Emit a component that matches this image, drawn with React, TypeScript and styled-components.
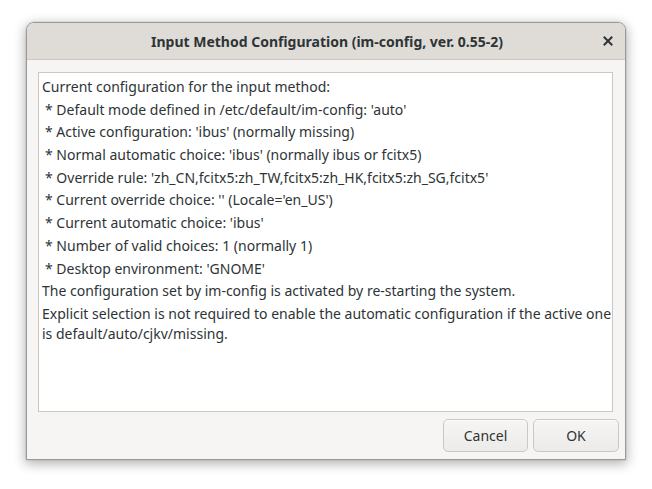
import styled, { createGlobalStyle } from 'styled-components';

const GlobalStyle = createGlobalStyle`
    html, body {
        margin: 0;
        padding: 0;
        background: #ffffff;
    }
    body {
        font-family: "Noto Sans", "Open Sans", "DejaVu Sans", sans-serif;
        color: #2e3436;
    }
`;

const Screen = styled.div`
    width: 652px;
    height: 489px;
    padding: 22px 0 0 26px;
    box-sizing: border-box;
`;

const Dialog = styled.div`
    width: 600px;
    height: 438px;
    box-sizing: border-box;
    display: flex;
    flex-direction: column;
    background: #f6f5f4;
    border: 1px solid #9a9996;
    border-radius: 8px 8px 0 0;
    box-shadow: 0 3px 12px 1px rgba(0, 0, 0, 0.3), 0 0 0 1px rgba(0, 0, 0, 0.05);
    overflow: hidden;
`;

const TitleBar = styled.div`
    height: 36px;
    flex: none;
    display: flex;
    align-items: center;
    justify-content: center;
    position: relative;
    background: #dfdcd8;
    border-bottom: 1px solid #cdc7c2;
`;

const Title = styled.div`
    font-size: 14px;
    font-weight: bold;
    color: #2e3436;
    padding-left: 2px;
`;

const CloseButton = styled.div`
    position: absolute;
    right: 5px;
    top: 6px;
    width: 24px;
    height: 24px;
    display: flex;
    align-items: center;
    justify-content: center;
`;

const Body = styled.div`
    flex: 1;
    display: flex;
    flex-direction: column;
    padding: 12px 6px 7px 11px;
    gap: 7px;
`;

const TextView = styled.div`
    flex: 1;
    background: #ffffff;
    border: 1px solid #cdc7c2;
    margin-right: 6px;
    padding: 4px 0 4px 3px;
    display: flex;
    flex-direction: column;
    gap: 2.7px;
    font-size: 14px;
    line-height: 20px;
    color: #2e3436;
`;

const Paragraph = styled.div<{ $indent?: boolean }>`
    white-space: pre-wrap;
    padding-left: ${p => (p.$indent ? '3px' : '0')};
`;

const ButtonRow = styled.div`
    display: flex;
    justify-content: flex-end;
    gap: 5px;
`;

const Button = styled.div<{ $width: number }>`
    width: ${p => p.$width}px;
    height: 33px;
    box-sizing: border-box;
    display: flex;
    align-items: center;
    justify-content: center;
    border: 1px solid #cdc7c2;
    border-radius: 5px;
    background: linear-gradient(#f6f5f4, #edebe9);
    box-shadow: inset 0 1px rgba(255, 255, 255, 0.8);
    font-size: 14px;
    color: #2e3436;
`;

const lines: { text: string; indent?: boolean }[] = [
    { text: 'Current configuration for the input method:' },
    { text: "* Default mode defined in /etc/default/im-config: 'auto'", indent: true },
    { text: "* Active configuration: 'ibus' (normally missing)", indent: true },
    { text: "* Normal automatic choice: 'ibus' (normally ibus or fcitx5)", indent: true },
    { text: "* Override rule: 'zh_CN,fcitx5:zh_TW,fcitx5:zh_HK,fcitx5:zh_SG,fcitx5'", indent: true },
    { text: "* Current override choice: '' (Locale='en_US')", indent: true },
    { text: "* Current automatic choice: 'ibus'", indent: true },
    { text: '* Number of valid choices: 1 (normally 1)', indent: true },
    { text: "* Desktop environment: 'GNOME'", indent: true },
    { text: 'The configuration set by im-config is activated by re-starting the system.' },
    { text: 'Explicit selection is not required to enable the automatic configuration if the active one\nis default/auto/cjkv/missing.' },
];

export default function App() {
    return (
        <>
            <GlobalStyle />
            <Screen>
                <Dialog>
                    <TitleBar>
                        <Title>Input Method Configuration (im-config, ver. 0.55-2)</Title>
                        <CloseButton>
                            <svg width="10" height="10" viewBox="0 0 10 10">
                                <path d="M1.5 1.5 L8.5 8.5 M8.5 1.5 L1.5 8.5" stroke="#2e3436" strokeWidth="2" strokeLinecap="square" />
                            </svg>
                        </CloseButton>
                    </TitleBar>
                    <Body>
                        <TextView>
                            {lines.map((l, i) => (
                                <Paragraph key={i} $indent={l.indent}>{l.text}</Paragraph>
                            ))}
                        </TextView>
                        <ButtonRow>
                            <Button $width={85}>Cancel</Button>
                            <Button $width={86}>OK</Button>
                        </ButtonRow>
                    </Body>
                </Dialog>
            </Screen>
        </>
    );
}
